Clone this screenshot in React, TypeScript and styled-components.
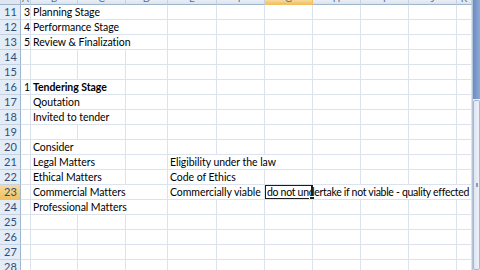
import styled, { createGlobalStyle } from "styled-components";

const GlobalStyle = createGlobalStyle`
  html, body {
    margin: 0;
    padding: 0;
    background: #ffffff;
    overflow: hidden;
  }
  body {
    font-family: Lato, "Liberation Sans", sans-serif;
  }
`;

const COLS = ["A", "B", "C", "D", "E", "F", "G", "H", "I", "J", "K"];
const WIDTHS = [10, 47, 48, 42, 49, 48, 48, 48, 48, 48, 15];

type CellData = { col: number; span: number; text: string; bold?: boolean; selected?: boolean; tight?: boolean };
type RowData = { n: number; cells: CellData[] };

const ROWS: RowData[] = [
  { n: 11, cells: [{ col: 0, span: 1, text: "3" }, { col: 1, span: 3, text: "Planning Stage" }] },
  { n: 12, cells: [{ col: 0, span: 1, text: "4" }, { col: 1, span: 3, text: "Performance Stage" }] },
  { n: 13, cells: [{ col: 0, span: 1, text: "5" }, { col: 1, span: 3, text: "Review & Finalization" }] },
  { n: 14, cells: [] },
  { n: 15, cells: [] },
  { n: 16, cells: [{ col: 0, span: 1, text: "1" }, { col: 1, span: 2, text: "Tendering Stage", bold: true }] },
  { n: 17, cells: [{ col: 1, span: 2, text: "Qoutation" }] },
  { n: 18, cells: [{ col: 1, span: 2, text: "Invited to tender" }] },
  { n: 19, cells: [] },
  { n: 20, cells: [{ col: 1, span: 2, text: "Consider" }] },
  { n: 21, cells: [{ col: 1, span: 2, text: "Legal Matters" }, { col: 4, span: 3, text: "Eligibility under the law" }] },
  { n: 22, cells: [{ col: 1, span: 2, text: "Ethical Matters" }, { col: 4, span: 2, text: "Code of Ethics" }] },
  {
    n: 23,
    cells: [
      { col: 1, span: 3, text: "Commercial Matters" },
      { col: 4, span: 2, text: "Commercially viable" },
      { col: 6, span: 5, text: "do not undertake if not viable - quality effected", selected: true, tight: true },
    ],
  },
  { n: 24, cells: [{ col: 1, span: 3, text: "Professional Matters" }] },
  { n: 25, cells: [] },
  { n: 26, cells: [] },
  { n: 27, cells: [] },
  { n: 28, cells: [] },
];

const Screen = styled.div`
  display: flex;
  width: 480px;
  height: 270px;
  overflow: hidden;
`;

const Sheet = styled.div`
  display: grid;
  grid-template-columns: 21px ${WIDTHS.map((w) => w + "px").join(" ")};
  grid-auto-rows: 15px;
  grid-template-rows: 5px;
  width: 472px;
  align-content: start;
  font-size: 10.5px;
  color: #000;
`;

const Corner = styled.div`
  background: #dfe6f0;
  border-right: 1px solid #9eb6ce;
  border-bottom: 1px solid #9eb6ce;
  box-sizing: border-box;
`;

const ColHead = styled.div<{ $active?: boolean }>`
  background: ${(p) => (p.$active ? "linear-gradient(#f9d99f, #f1c15f)" : "linear-gradient(#e9eef5, #dbe3ee)")};
  border-right: 1px solid ${(p) => (p.$active ? "#f2c15e" : "#c5d2e2")};
  border-bottom: 1px solid ${(p) => (p.$active ? "#f2c15e" : "#9eb6ce")};
  box-sizing: border-box;
  overflow: hidden;
  display: flex;
  justify-content: center;
  color: #5a6f8f;
  font-size: 10px;
  span {
    display: block;
    line-height: 10px;
    margin-top: -7px;
  }
`;

const RowHead = styled.div<{ $active?: boolean }>`
  background: ${(p) => (p.$active ? "linear-gradient(#f9d99f, #f1c15f)" : "#e4ecf7")};
  border-right: 1px solid #9eb6ce;
  border-bottom: 1px solid ${(p) => (p.$active ? "#f2c15e" : "#c5d2e2")};
  box-sizing: border-box;
  color: #2f4f7b;
  font-size: 11px;
  line-height: 14px;
  text-align: center;
  padding-left: 1px;
`;

const Cell = styled.div<{ $bold?: boolean; $tight?: boolean }>`
  position: relative;
  border-right: 1px solid #dde3ec;
  border-bottom: 1px solid #dde3ec;
  box-sizing: border-box;
  white-space: nowrap;
  overflow: hidden;
  line-height: 13px;
  padding: 1px 0 0 2px;
  font-weight: ${(p) => (p.$bold ? 700 : 400)};
  letter-spacing: ${(p) => (p.$tight ? "-0.3px" : "-0.05px")};
`;

const NumCell = styled(Cell)`
  padding-left: 3px;
`;

const Selection = styled.div`
  position: absolute;
  left: -1px;
  top: -1px;
  width: 49px;
  height: 16px;
  border: 2px solid #1c1c1c;
  box-sizing: border-box;
  &::after {
    content: "";
    position: absolute;
    right: -4px;
    bottom: -4px;
    width: 4px;
    height: 4px;
    background: #1c1c1c;
    border: 1px solid #fff;
  }
`;

const ScrollBar = styled.div`
  width: 8px;
  display: flex;
  flex-direction: column;
  background: #e8edf6;
  border-left: 1px solid #b6c4da;
  box-sizing: border-box;
`;

const Track = styled.div`
  height: 99px;
  background: linear-gradient(90deg, #6a8dc2, #8fa9d3);
`;

const Thumb = styled.div`
  flex: 1;
  margin-top: 1px;
  background: linear-gradient(90deg, #dfe5f2, #eef1f8);
  border: 1px solid #a8b6d0;
  border-radius: 2px;
  display: flex;
  align-items: center;
  justify-content: center;
  &::before {
    content: "";
    width: 2px;
    height: 4px;
    background: #8a9bbb;
  }
`;

function SheetRow({ row }: { row: RowData }) {
  const out: JSX.Element[] = [];
  let c = 0;
  while (c < COLS.length) {
    const data = row.cells.find((d) => d.col === c);
    if (data) {
      const Kind = c === 0 ? NumCell : Cell;
      out.push(
        <Kind key={c} $bold={data.bold} $tight={data.tight} style={{ gridColumn: `span ${data.span}` }}>
          {data.text}
          {data.selected && <Selection />}
        </Kind>
      );
      c += data.span;
    } else {
      out.push(<Cell key={c} />);
      c += 1;
    }
  }
  return (
    <>
      <RowHead $active={row.n === 23}>{row.n}</RowHead>
      {out}
    </>
  );
}

export default function App() {
  return (
    <Screen>
      <GlobalStyle />
      <Sheet>
        <Corner />
        {COLS.map((c) => (
          <ColHead key={c} $active={c === "G"}>
            <span>{c}</span>
          </ColHead>
        ))}
        {ROWS.map((r) => (
          <SheetRow key={r.n} row={r} />
        ))}
      </Sheet>
      <ScrollBar>
        <Track />
        <Thumb />
      </ScrollBar>
    </Screen>
  );
}
